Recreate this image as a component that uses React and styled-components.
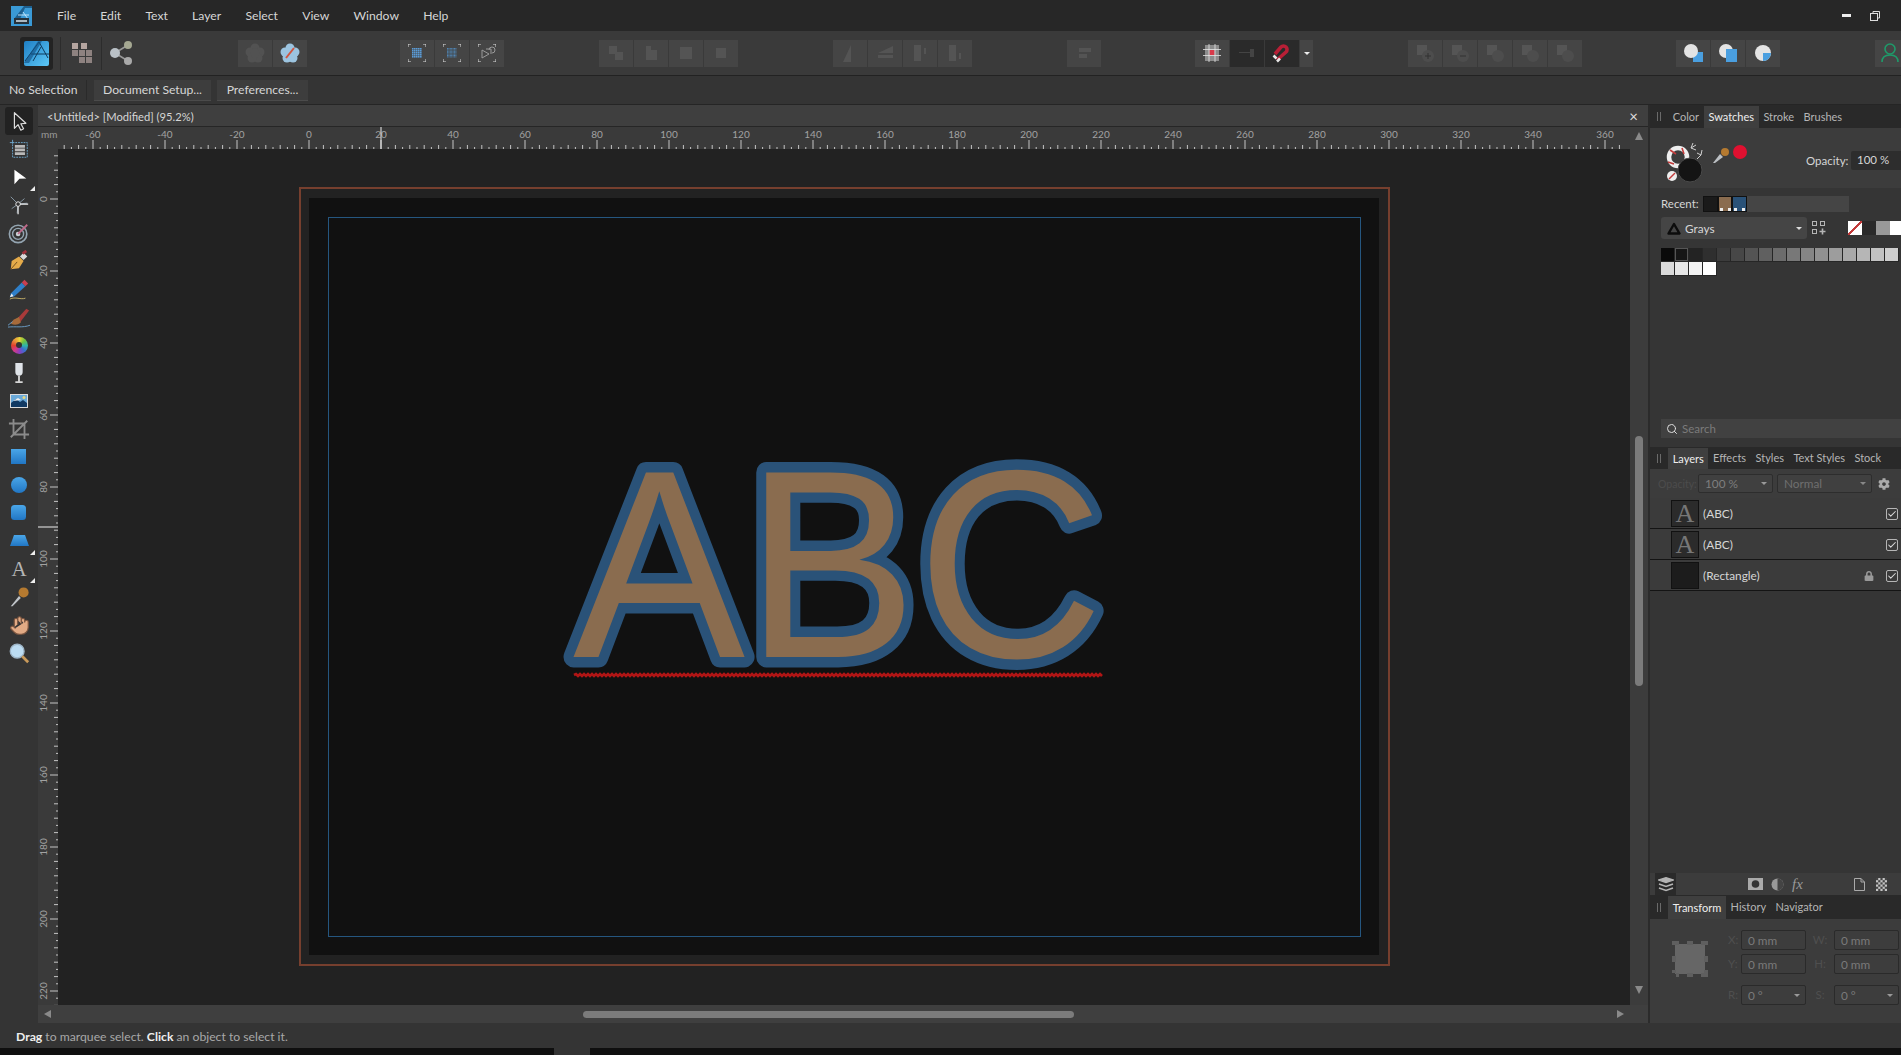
import React from "react";
import styled, { createGlobalStyle } from "styled-components";
import { Search, Hand, Check } from "lucide-react";
import { FaCog, FaLock } from "react-icons/fa";

const GlobalStyle = createGlobalStyle`
  html, body { margin: 0; padding: 0; background: #111; overflow: hidden; }
  * { box-sizing: border-box; }
`;

const UI = `Lato, "Open Sans", "Liberation Sans", sans-serif`;

const Window = styled.div`
  width: 1901px;
  height: 1055px;
  overflow: hidden;
  display: flex;
  flex-direction: column;
  font-family: ${UI};
  font-size: 12.2px;
  color: #d6d6d6;
  background: #111;
`;

/* title bar */
const TitleBar = styled.div`
  height: 31px;
  flex: none;
  display: flex;
  align-items: center;
  padding-left: 11px;
  background: #272727;
`;
const Menu = styled.nav`
  display: flex;
  gap: 24.2px;
  margin-left: 25px;
  font-size: 12.2px;
`;
const WinButtons = styled.div`
  margin-left: auto;
  display: flex;
  align-items: center;
  gap: 19px;
  width: 59px;
`;

/* toolbar */
const Toolbar = styled.div`
  height: 45px;
  flex: none;
  display: flex;
  align-items: center;
  padding-left: 20px;
  background: #3a3a3a;
  border-bottom: 1px solid #222;
  overflow: hidden;
`;
const Persona = styled.div`
  width: 33px;
  height: 33px;
  flex: none;
  background: #232323;
  border-radius: 3px;
  display: flex;
  align-items: center;
  justify-content: center;
`;
const ToolSep = styled.div`
  width: 1px;
  height: 33px;
  flex: none;
  background: #2c2c2c;
  margin-left: ${(p) => p.$left}px;
`;
const PlainIcon = styled.div`
  height: 33px;
  flex: none;
  display: flex;
  align-items: center;
  margin-left: ${(p) => p.$left}px;
`;
const Group = styled.div`
  display: flex;
  flex: none;
  gap: 1px;
  margin-left: ${(p) => p.$left}px;
`;
const ToolBtn = styled.div`
  width: ${(p) => p.$w || 34}px;
  height: 27px;
  flex: none;
  background: ${(p) => (p.$dark ? "#2a2a2a" : "#454545")};
  display: flex;
  align-items: center;
  justify-content: center;
`;

/* context bar */
const ContextBar = styled.div`
  height: 29px;
  flex: none;
  display: flex;
  align-items: center;
  padding-left: 9px;
  background: #343434;
  border-bottom: 1px solid #252525;
`;
const ContextLabel = styled.span`
  width: 78px;
  height: 20px;
  line-height: 20px;
  border-right: 1px solid #2a2a2a;
`;
const ContextButton = styled.div`
  width: ${(p) => p.$w}px;
  height: 21px;
  line-height: 20px;
  margin-left: ${(p) => p.$left}px;
  text-align: center;
  background: #3d3d3d;
  border-bottom: 1px solid #4b4b4b;
`;

/* workspace */
const Workspace = styled.div`
  flex: none;
  height: 918px;
  display: flex;
`;
const ToolColumn = styled.div`
  width: 38px;
  flex: none;
  background: #343434;
  display: flex;
  flex-direction: column;
  align-items: center;
  padding-top: 2px;
`;
const ToolCell = styled.div`
  position: relative;
  width: 28px;
  height: 28px;
  flex: none;
  display: flex;
  align-items: center;
  justify-content: center;
  border-radius: 3px;
  background: ${(p) => (p.$active ? "#222" : "transparent")};
  &::after {
    content: "";
    display: ${(p) => (p.$flyout ? "block" : "none")};
    position: absolute;
    right: -2px;
    bottom: 0;
    border-style: solid;
    border-width: 0 0 5px 5px;
    border-color: transparent transparent #eee transparent;
  }
`;
const ColorWheel = styled.div`
  width: 17px;
  height: 17px;
  border-radius: 50%;
  background: conic-gradient(#e8d33a, #6fc13f, #2fb5a8, #3a6fd0, #8a3fc0, #d03a8a, #e0402f, #e8903a, #e8d33a);
  display: flex;
  align-items: center;
  justify-content: center;
  &::after {
    content: "";
    width: 6px;
    height: 6px;
    border-radius: 50%;
    background: #333;
  }
`;
const Main = styled.div`
  width: 1610px;
  flex: none;
  display: flex;
  flex-direction: column;
`;
const DocTabs = styled.div`
  height: 22px;
  flex: none;
  display: flex;
  align-items: center;
  justify-content: space-between;
  padding: 1px 10px 0 9px;
  background: #3f3f3f;
  border-bottom: 1px solid #262626;
  font-size: 11.2px;
`;
const CloseMark = styled.span`
  font-size: 15px;
  color: #ddd;
  line-height: 1;
`;
const RulerRow = styled.div`
  height: 22px;
  flex: none;
  display: flex;
`;
const RulerH = styled.svg`
  width: 1592px;
  height: 22px;
  flex: none;
  display: block;
  background: #3a3a3a;
`;
const ArrowCell = styled.div`
  width: 18px;
  flex: none;
  background: #3c3c3c;
  display: flex;
  align-items: center;
  justify-content: center;
`;
const Middle = styled.div`
  height: 856px;
  flex: none;
  display: flex;
`;
const RulerV = styled.svg`
  width: 20px;
  height: 856px;
  flex: none;
  display: block;
  background: #3a3a3a;
`;
const Canvas = styled.div`
  width: 1572px;
  flex: none;
  background: #222;
  padding: 38px 0 0 241px;
`;
const Bleed = styled.div`
  width: 1091px;
  height: 779px;
  border: 2px solid #763f2e;
  padding: 9px 9px 9px 8px;
`;
const Page = styled.div`
  width: 100%;
  height: 100%;
  background: #111;
  padding: 19px 18px 18px 19px;
`;
const Margins = styled.div`
  width: 100%;
  height: 100%;
  border: 1px solid #25567f;
`;
const Artwork = styled.svg`
  width: 100%;
  height: 100%;
  display: block;
  overflow: visible;
`;
const VScroll = styled.div`
  width: 18px;
  flex: none;
  background: #3c3c3c;
  display: flex;
  flex-direction: column;
  align-items: center;
  padding-top: 287px;
`;
const VThumb = styled.div`
  width: 8px;
  height: 250px;
  border-radius: 4px;
  background: #7b7b7b;
`;
const ArrowDown = styled.div`
  margin-top: 300px;
  width: 0;
  height: 0;
  border-style: solid;
  border-width: 8px 4.5px 0 4.5px;
  border-color: #8a8a8a transparent transparent transparent;
`;
const ArrowUp = styled.div`
  width: 0;
  height: 0;
  margin-top: -4px;
  border-style: solid;
  border-width: 0 4.5px 8px 4.5px;
  border-color: transparent transparent #8a8a8a transparent;
`;
const HScroll = styled.div`
  height: 18px;
  flex: none;
  background: #3f3f3f;
  display: flex;
  align-items: center;
  padding-left: 6px;
`;
const ArrowLeft = styled.div`
  width: 0;
  height: 0;
  border-style: solid;
  border-width: 4.5px 7px 4.5px 0;
  border-color: transparent #8a8a8a transparent transparent;
`;
const ArrowRight = styled.div`
  width: 0;
  height: 0;
  margin-left: 543px;
  border-style: solid;
  border-width: 4.5px 0 4.5px 7px;
  border-color: transparent transparent transparent #8a8a8a;
`;
const HThumb = styled.div`
  width: 491px;
  height: 7px;
  margin-left: 532px;
  border-radius: 4px;
  background: #7b7b7b;
`;
const Divider = styled.div`
  width: 2px;
  flex: none;
  background: #2b2b2b;
`;

/* right panels */
const Panels = styled.div`
  flex: 1;
  min-width: 0;
  overflow: hidden;
  display: flex;
  flex-direction: column;
  background: #353535;
`;
const TabRow = styled.div`
  height: ${(p) => p.$h}px;
  flex: none;
  display: flex;
  align-items: stretch;
  background: #292929;
`;
const Grip = styled.div`
  width: 18px;
  flex: none;
  display: flex;
  align-items: center;
  justify-content: center;
  gap: 2px;
  &::before, &::after {
    content: "";
    width: 1px;
    height: 9px;
    background: #6a6a6a;
  }
`;
const Tab = styled.div`
  padding: 0 4.7px 1px;
  display: flex;
  align-items: center;
  white-space: nowrap;
  font-size: 11px;
  color: ${(p) => (p.$active ? "#eee" : "#b5b5b5")};
  background: ${(p) => (p.$active ? "#3f3f3f" : "transparent")};
  margin-top: ${(p) => (p.$active ? 1 : 0)}px;
`;
const ColorHead = styled.div`
  height: 60px;
  flex: none;
  background: #3c3c3c;
  display: flex;
  align-items: center;
`;
const ColorWidget = styled.svg`
  width: 156px;
  height: 60px;
  flex: none;
`;
const OpacityLabel = styled.span`
  width: 45px;
  flex: none;
  font-size: 11.5px;
  margin-top: 4px;
`;
const NumberField = styled.div`
  width: 60px;
  height: 19px;
  margin-top: 4px;
  padding-left: 6px;
  line-height: 18px;
  font-size: 11.5px;
  background: #2d2d2d;
  border-radius: 2px;
  flex: none;
`;
const SwatchBody = styled.div`
  height: 231px;
  flex: none;
  padding: 8px 0 0 11px;
  display: flex;
  flex-direction: column;
`;
const RecentRow = styled.div`
  display: flex;
  align-items: center;
  height: 16px;
  font-size: 11.5px;
`;
const RecentLabel = styled.span`
  width: 42px;
  margin-top: -2px;
`;
const RecentWell = styled.div`
  width: 146px;
  height: 16px;
  background: #454545;
  display: flex;
`;
const RecentChip = styled.div`
  position: relative;
  width: 14.5px;
  height: 16px;
  background: ${(p) => p.$c};
  border: 1px solid #111;
  &::after {
    content: "";
    display: ${(p) => (p.$mark ? "block" : "none")};
    position: absolute;
    left: 1px;
    bottom: 0;
    width: 3px;
    height: 3px;
    background: #eee;
    box-shadow: 8px 0 0 #eee;
  }
`;
const PaletteRow = styled.div`
  display: flex;
  align-items: center;
  margin-top: 5px;
  height: 22px;
`;
const PaletteSelect = styled.div`
  width: 146px;
  height: 22px;
  flex: none;
  background: #454545;
  border-radius: 3px;
  display: flex;
  align-items: center;
  padding: 0 5px 0 6px;
  gap: 4px;
  font-size: 11.8px;
`;
const PaletteAdd = styled.svg`
  width: 16px;
  height: 16px;
  flex: none;
  margin: 0 21px 0 4px;
`;
const Caret = styled.span`
  margin-left: ${(p) => (p.$center ? 0 : "auto")};
  width: 0;
  height: 0;
  border-style: solid;
  border-width: 3px 3px 0 3px;
  border-color: ${(p) => p.$c || "#ddd"} transparent transparent transparent;
`;
const QuickChip = styled.div`
  width: 14px;
  height: 14px;
  flex: none;
  background: ${(p) => p.$c};
`;
const NoneChip = styled(QuickChip)`
  background: linear-gradient(to bottom right, #fff 45%, #c23a3a 45%, #c23a3a 55%, #fff 55%);
`;
const SwatchGrid = styled.div`
  display: grid;
  grid-template-columns: repeat(17, 14px);
  grid-auto-rows: 14px;
  margin-top: 9px;
`;
const Swatch = styled.div`
  background: ${(p) => p.$c};
  border: 1px solid #262626;
  border-width: 0 1px 1px 0;
  box-shadow: ${(p) => (p.$on ? "inset 0 0 0 1px #555" : "none")};
`;
const SearchWrap = styled.div`
  height: 28px;
  flex: none;
  padding-left: 11px;
`;
const SearchBox = styled.div`
  height: 19px;
  background: #414141;
  display: flex;
  align-items: center;
  padding-left: 5px;
  gap: 4px;
  color: #7b7b7b;
  font-size: 11.5px;
`;
const LayerControls = styled.div`
  height: 29px;
  flex: none;
  background: #3c3c3c;
  display: flex;
  align-items: center;
  padding-left: 8px;
  font-size: 11.5px;
  color: #555;
`;
const DimLabel = styled.span`
  width: 40px;
  flex: none;
  color: #4c4c4c;
  font-size: 10.5px;
`;
const LayerSelect = styled.div`
  width: ${(p) => p.$w}px;
  height: 19px;
  flex: none;
  margin-right: 4px;
  padding: 0 5px 0 6px;
  display: flex;
  align-items: center;
  background: #404040;
  border: 1px solid #2d2d2d;
  border-radius: 2px;
  color: ${(p) => (p.$dim ? "#6f6f6f" : "#7e7e7e")};
  font-size: 11.8px;
`;
const LayerRow = styled.div`
  height: 31px;
  flex: none;
  display: flex;
  align-items: center;
  padding: 1px 3px 0 21px;
  background: #3b3b3b;
  border-bottom: 1px solid #141414;
  font-size: 11.8px;
`;
const Thumb = styled.div`
  width: 28px;
  height: 27px;
  margin: -1px 4px 0 0;
  flex: none;
  background: ${(p) => (p.$fill ? "#1c1c1c" : "#2b2b2b")};
  border: 1px solid #111;
  font-family: "Liberation Serif", serif;
  font-size: 26px;
  line-height: 26px;
  text-align: center;
  color: #777;
`;
const RowEnd = styled.div`
  margin-left: auto;
  display: flex;
  align-items: center;
  gap: 12px;
  color: #aaa;
`;
const CheckBox = styled.div`
  width: 12px;
  height: 12px;
  border: 1px solid #b5b5b5;
  border-radius: 2px;
  display: flex;
  align-items: center;
  justify-content: center;
  color: #ddd;
`;
const Filler = styled.div`
  flex: 1;
`;
const LayerBar = styled.div`
  height: 22px;
  flex: none;
  background: #3c3c3c;
  display: flex;
  align-items: center;
  padding-left: 5px;
  color: #999;
`;
const LayersBtn = styled.div`
  width: 21px;
  height: 22px;
  background: #2a2a2a;
  display: flex;
  align-items: center;
  justify-content: center;
`;
const BarIcon = styled.div`
  margin-left: ${(p) => p.$left}px;
  display: flex;
  align-items: center;
  font-family: "Liberation Serif", serif;
  font-style: italic;
  font-size: 15px;
`;
const TransformBody = styled.div`
  height: 104px;
  flex: none;
  background: #3c3c3c;
  display: flex;
  padding: 11px 0 0 22px;
  color: #4f4f4f;
  font-size: 11.5px;
`;
const AnchorIcon = styled.svg`
  width: 36px;
  height: 36px;
  margin-top: 11px;
  flex: none;
`;
const FieldGrid = styled.div`
  display: grid;
  margin-left: 20px;
  grid-template-columns: 13px 65px 28px 65px;
  grid-template-rows: 20px 20px 27px;
  row-gap: 4px;
  align-items: end;
`;
const FieldName = styled.span`
  line-height: 20px;
  text-align: ${(p) => (p.$right ? "center" : "left")};
`;
const Field = styled.div`
  height: 20px;
  padding: 0 5px 0 6px;
  display: flex;
  align-items: center;
  background: #3d3d3d;
  border: 1px solid #2a2a2a;
  border-radius: 2px;
  color: #7a7a7a;
  font-size: 11.8px;
`;
const StatusBar = styled.div`
  height: 25px;
  flex: none;
  background: #343434;
  padding: 1px 0 0 16px;
  display: flex;
  align-items: center;
  font-size: 12.2px;
  color: #a8a8a8;
  b { color: #eee; font-weight: 700; }
  span { white-space: pre; }
`;
const BottomStrip = styled.div`
  height: 7px;
  flex: none;
  background: #0f0f0f;
  padding-left: 554px;
`;
const StripNotch = styled.div`
  width: 36px;
  height: 7px;
  background: #343434;
`;

/* drawings */
const Svg = ({ w = 22, h = 22, view = "0 0 24 24", children }) => (
  <svg width={w} height={h} viewBox={view} fill="none">{children}</svg>
);

const BlueFill = ({ id }) => (
  <defs>
    <linearGradient id={id} x1="0" y1="0" x2="0" y2="1">
      <stop offset="0" stopColor="#4aa6e8" />
      <stop offset="1" stopColor="#2176c4" />
    </linearGradient>
  </defs>
);

const AppLogo = () => (
  <svg width="21" height="20" viewBox="0 0 21 20">
    <rect width="21" height="20" fill="#3a9ad6" />
    <path d="M3 13 L13 0 L21 0 L21 2 L14 2 L9 13 Z" fill="#1d5f8e" />
    <path d="M12 6 L17 13 M7 9 L18 9" stroke="#bfe4fa" strokeWidth="1" />
    <rect x="3" y="12" width="15" height="6" fill="#26323b" />
    <rect x="5" y="14" width="11" height="2" fill="#aab7c0" />
  </svg>
);
const PersonaIcon = () => (
  <svg width="25" height="25" viewBox="0 0 25 25">
    <defs>
      <linearGradient id="pers" x1="0" y1="0" x2="1" y2="1">
        <stop offset="0" stopColor="#1f7ec4" />
        <stop offset="1" stopColor="#5cc8f7" />
      </linearGradient>
    </defs>
    <rect width="25" height="25" rx="2" fill="url(#pers)" />
    <path d="M1 20 L15 1 M15 1 L24 17 M9 20 L17 6 M7 13 L25 13" stroke="#0e3a5c" strokeWidth="1" fill="none" />
    <path d="M0 22 L14 0 L18 0 L5 22 Z" fill="#145487" opacity=".65" />
  </svg>
);
const StudioIcon = () => (
  <svg width="22" height="22" viewBox="0 0 22 22">
    <path d="M1 1h6v6H1zM10 1h6v6h-6z" fill="#b5a5a0" />
    <path d="M1 8h6v6H1zM8 8h6v6H8zM15 8h6v6h-6zM8 15h6v6H8zM15 15h6v6h-6z" fill="#8e8280" />
  </svg>
);
const ShareIcon = () => (
  <svg width="24" height="24" viewBox="0 0 24 24">
    <path d="M6 12 L19 4 M6 12 L19 20" stroke="#999" strokeWidth="1.5" />
    <circle cx="6" cy="12" r="5" fill="#b9c0c6" />
    <circle cx="19" cy="4" r="4" fill="#a5a892" />
    <circle cx="19" cy="20" r="4" fill="#a9a9a9" />
  </svg>
);
const Flower = ({ fill, slash }) => (
  <svg width="20" height="20" viewBox="0 0 20 20">
    <g fill={fill}>
      <circle cx="10" cy="5" r="4.5" />
      <circle cx="15" cy="9" r="4.5" />
      <circle cx="13" cy="15" r="4.5" />
      <circle cx="7" cy="15" r="4.5" />
      <circle cx="5" cy="9" r="4.5" />
      <circle cx="10" cy="10" r="5" />
    </g>
    {slash && <path d="M6 15 L14 5" stroke="#d2553f" strokeWidth="2" />}
  </svg>
);
const Corners = ({ children }) => (
  <svg width="18" height="18" viewBox="0 0 18 18">
    <path d="M0 3V0h3M15 0h3v3M18 15v3h-3M3 18H0v-3" stroke="#ddd" strokeWidth="1" fill="none" />
    {children}
  </svg>
);
const Dots = ({ c, x = 4, y = 4, n = 5, s = 2 }) => (
  <g fill={c}>
    {Array.from({ length: n * n }, (_, i) => (
      <rect key={i} x={x + (i % n) * s} y={y + Math.floor(i / n) * s} width={s - 0.4} height={s - 0.4} />
    ))}
  </g>
);
const DimShape = ({ d, c = "#545454" }) => (
  <svg width="20" height="20" viewBox="0 0 20 20">
    <path d={d} fill={c} />
  </svg>
);
const BoolOp = ({ sign }) => (
  <svg width="20" height="20" viewBox="0 0 20 20">
    <rect x="2" y="2" width="10" height="10" fill="#555" />
    <circle cx="13" cy="13" r="6" fill="#4d4d4d" />
    {sign && <path d={sign} stroke="#333" strokeWidth="1" />}
  </svg>
);
const SnapGrid = () => (
  <svg width="18" height="18" viewBox="0 0 18 18">
    <rect x="2" y="1" width="14" height="16" fill="#8c8c8c" />
    <rect x="6.5" y="6" width="5" height="5" fill="#d83a4a" />
    <path d="M0 5.5H18M0 11.5H18M6 0V18M12 0V18" stroke="#e4e4e4" strokeWidth="0.8" />
  </svg>
);
const Magnet = () => (
  <svg width="20" height="20" viewBox="0 0 20 20" fill="none">
    <path d="M5 17 L14 9 A3.5 3.5 0 0 0 9 4 L3 11" stroke="#b81f36" strokeWidth="3.6" />
    <path d="M1.5 12.5 L4.5 15.5 M5 18.5 L8 15.5" stroke="#e8e8e8" strokeWidth="2.6" />
  </svg>
);
const OrderIcon = ({ kind }) => (
  <svg width="21" height="20" viewBox="0 0 21 20">
    {kind === 0 && <><path d="M10 9h10v10H10z" fill="#4a9fe0" /><circle cx="8" cy="8" r="7" fill="#e4e4e4" /></>}
    {kind === 1 && <><circle cx="8" cy="8" r="7" fill="#e4e4e4" /><path d="M8 6h11v13H8z" fill="#4a9fe0" /></>}
    {kind === 2 && <><circle cx="10" cy="10" r="8" fill="#e4e4e4" /><path d="M10 10h8a8 8 0 0 1-8 8z" fill="#4a9fe0" /></>}
  </svg>
);
const AccountIcon = () => (
  <svg width="20" height="22" viewBox="0 0 20 22" fill="none" stroke="#1f9a6a" strokeWidth="1.6">
    <circle cx="10" cy="7" r="5" />
    <path d="M2 20 C2 14 6 13 10 13 C14 13 18 14 18 20" />
  </svg>
);

const tools = [
  { icon: <Svg><path d="M7 3 V20 L11 16 L14 22 L17 20.5 L14 15 L19.5 14.5 Z" stroke="#ddd" strokeWidth="1.3" strokeLinejoin="round" /></Svg>, active: true },
  { icon: <Svg><path d="M5 2v4M2 5h4" stroke="#6ea8cf" /><rect x="5" y="5" width="16" height="16" stroke="#6ea8cf" strokeDasharray="2 1" /><path d="M7.5 7.5h11v3h-11zM7.5 11.5h11v3h-11zM7.5 15.5h11v3h-11z" fill="#b9b9b9" /></Svg> },
  { icon: <Svg w={22} h={22}><path d="M7 4 V20 L12.5 14 L20 13.5 Z" fill="#fff" /></Svg>, flyout: true },
  { icon: <Svg><path d="M3 3 L11 11 L21 10 M11 11 L10 21 M18 5 L11 11 M4 16 L11 11" stroke="#8a9ba8" strokeWidth="1" /><path d="M11 11 H22 M11 11 V22" stroke="#eee" strokeWidth="1.3" /><circle cx="11" cy="11" r="2.5" fill="#333" stroke="#eee" /></Svg> },
  { icon: <Svg><circle cx="11" cy="13" r="9.5" stroke="#93a4b0" strokeWidth="1.8" /><circle cx="11" cy="13" r="6" stroke="#93a4b0" strokeWidth="1.5" /><circle cx="11" cy="13" r="2.5" fill="#c9d0d5" /><path d="M11 13 L21 3" stroke="#c06a8a" strokeWidth="2" /></Svg> },
  { icon: <Svg><path d="M3 21 L4 12 L12 7 L17 12 L12 20 Z" fill="#e5ab4a" /><path d="M3 21 L10 13" stroke="#6b4a1c" /><path d="M13 7 L17 3 L21 7 L17 11 Z" fill="#d9d9d9" /><path d="M16 4 L20 1" stroke="#a0303a" strokeWidth="3" /></Svg> },
  { icon: <Svg><path d="M3 17 L15 5 L19 9 L7 20 L2 21 Z" fill="#2f7fc8" /><path d="M15 5 L18 2 L22 6 L19 9 Z" fill="#c93f4f" /><path d="M2 21 L4 17 L6 20 Z" fill="#eee" /><path d="M2 23 C8 20 14 24 19 22" stroke="#c9b36a" /></Svg> },
  { icon: <Svg><path d="M9 15 L20 3 L23 5 L13 18 Z" fill="#a83a3a" /><path d="M6 15 L12 12 L14 18 C10 21 7 21 3 19 Z" fill="#a66a3a" /><path d="M0 21 L5 17 M0 23 C8 22 16 24 24 21" stroke="#6c9fc8" /></Svg> },
  { wheel: true },
  { icon: <Svg><path d="M8 1h8v10a4 4 0 0 1-8 0z" fill="#dfe3e8" /><path d="M12 15v6M8 22h8" stroke="#d6d6d6" strokeWidth="2" /></Svg> },
  { icon: <svg width="18" height="14" viewBox="0 0 18 14"><rect width="18" height="14" fill="#dcdcdc" /><rect x="1" y="1" width="16" height="12" fill="#6aa9d8" /><path d="M1 9 L6 5 L10 8 L13 6 L17 9 V13 H1 Z" fill="#123a63" /><circle cx="14" cy="3.5" r="1.5" fill="#e8d880" /><path d="M3 7 L8 4 L11 6 Z" fill="#f0f0f0" /></svg> },
  { icon: <Svg><path d="M6 1 V18 H23 M1 6 H18 V23 M3 21 L21 3" stroke="#8b8b8b" strokeWidth="2" /></Svg> },
  { icon: <Svg view="0 0 22 22"><BlueFill id="r1" /><rect x="3" y="3" width="15" height="15" fill="url(#r1)" /></Svg> },
  { icon: <Svg view="0 0 22 22"><BlueFill id="r2" /><circle cx="11" cy="11" r="8" fill="url(#r2)" /></Svg> },
  { icon: <Svg view="0 0 22 22"><BlueFill id="r3" /><rect x="3" y="3" width="15" height="15" rx="3.5" fill="url(#r3)" /></Svg> },
  { icon: <Svg view="0 0 22 22"><BlueFill id="r4" /><path d="M6 5 H17 L21 16 H2 Z" fill="url(#r4)" /></Svg>, flyout: true },
  { text: "A", flyout: true },
  { icon: <Svg><path d="M3 22 L12 11 L14 13 L5 22 Z" fill="#bfc4c8" /><path d="M11 8 L17 14" stroke="#333" strokeWidth="1" /><circle cx="17" cy="7" r="5.5" fill="#b57a30" /></Svg> },
  { hand: true },
  { icon: <Svg><circle cx="10" cy="10" r="7.5" fill="#bcdcf2" stroke="#9fb6c8" strokeWidth="1.5" /><path d="M15.5 15.5 L22 22" stroke="#c99a5a" strokeWidth="3" /></Svg> },
];

const ToolGlyph = styled.span`
  font-family: "Liberation Serif", serif;
  font-size: 21px;
  color: #b5b5b5;
  line-height: 1;
`;

const hTicks = () => {
  const out = [];
  for (let mm = -68; mm <= 364; mm += 2) {
    const x = 309 + mm * 3.6;
    const len = mm % 20 === 0 ? 9 : mm % 4 === 0 ? 4 : 2;
    out.push(<line key={mm} x1={x} x2={x} y1={22 - len} y2={22} stroke="#c4c4c4" strokeWidth="1" />);
    if (mm % 20 === 0)
      out.push(<text key={"l" + mm} x={x} y={11} textAnchor="middle" fontSize="10" fill="#a2a2a2" fontFamily="Lato, sans-serif">{mm}</text>);
  }
  return out;
};

const vTicks = () => {
  const out = [];
  for (let mm = -12; mm <= 224; mm += 2) {
    const y = 50 + mm * 3.6;
    const len = mm % 20 === 0 ? 8 : mm % 4 === 0 ? 4 : 2;
    out.push(<line key={mm} x1={20 - len} x2={20} y1={y} y2={y} stroke="#c4c4c4" strokeWidth="1" />);
    if (mm % 20 === 0)
      out.push(<text key={"l" + mm} transform={`translate(9 ${y}) rotate(-90)`} textAnchor="middle" fontSize="10" fill="#a2a2a2" fontFamily="Lato, sans-serif">{mm}</text>);
  }
  return out;
};

const squiggle = () => {
  let d = "M574 675";
  for (let x = 576, up = true; x <= 1103; x += 2, up = !up) d += ` L${x} ${up ? 674 : 676}`;
  return d;
};

const grays = Array.from({ length: 21 }, (_, i) => {
  const v = Math.round(10 + (i * 245) / 20);
  return `rgb(${v},${v},${v})`;
});

const Tabs = ({ h, items, active }) => (
  <TabRow $h={h}>
    <Grip />
    {items.map((t) => (
      <Tab key={t} $active={t === active}>{t}</Tab>
    ))}
  </TabRow>
);

const layers = [
  { name: "(ABC)", text: true },
  { name: "(ABC)", text: true },
  { name: "(Rectangle)", locked: true },
];

export default function App() {
  return (
    <Window>
      <GlobalStyle />
      <TitleBar>
        <AppLogo />
        <Menu>
          {["File", "Edit", "Text", "Layer", "Select", "View", "Window", "Help"].map((m) => (
            <span key={m}>{m}</span>
          ))}
        </Menu>
        <WinButtons>
          <svg width="9" height="3"><rect width="9" height="3" fill="#eee" /></svg>
          <svg width="10" height="10" viewBox="0 0 10 10" fill="none" stroke="#ddd"><rect x=".5" y="2.5" width="7" height="7" /><path d="M3 2V.5h6.5V7H8" /></svg>
        </WinButtons>
      </TitleBar>

      <Toolbar>
        <Persona><PersonaIcon /></Persona>
        <ToolSep $left={7} />
        <PlainIcon $left={10}><StudioIcon /></PlainIcon>
        <ToolSep $left={8} />
        <PlainIcon $left={7}><ShareIcon /></PlainIcon>

        <Group $left={104.5}>
          <ToolBtn><Flower fill="#525252" /></ToolBtn>
          <ToolBtn><Flower fill="#9cc4e0" slash /></ToolBtn>
        </Group>
        <Group $left={93.5}>
          <ToolBtn><Corners><Dots c="#5a9bd6" /></Corners></ToolBtn>
          <ToolBtn><Corners><Dots c="#5085b5" n={7} s={1.4} /></Corners></ToolBtn>
          <ToolBtn><Corners><path d="M4 6 L4 14 L11 10 Z M8 5 h5 v5 M11 6 a3 3 0 1 1 3 3" stroke="#9a9a9a" fill="none" /></Corners></ToolBtn>
        </Group>
        <Group $left={95}>
          <ToolBtn><DimShape d="M3 3h8v8H3zM9 9h8v8H9z" /></ToolBtn>
          <ToolBtn><DimShape d="M5 3h5v4h6v10H5z" /></ToolBtn>
          <ToolBtn><DimShape d="M4 4h12v12H4z" /></ToolBtn>
          <ToolBtn><DimShape d="M5 5h10v10H5z" /></ToolBtn>
        </Group>
        <Group $left={95}>
          <ToolBtn><DimShape d="M11 2 V19 H3 Z" /></ToolBtn>
          <ToolBtn><DimShape d="M3 10 L18 3 V10 Z M3 12 H18 V15 H3 Z" /></ToolBtn>
          <ToolBtn><DimShape d="M4 2h7v16H4zM14 5h2v6h-2z" /></ToolBtn>
          <ToolBtn><DimShape d="M4 2h7v16H4zM14 10h2v6h-2z" /></ToolBtn>
        </Group>
        <Group $left={94.5}>
          <ToolBtn><DimShape d="M5 5h12v4H5zM5 11h8v4H5z" /></ToolBtn>
        </Group>
        <Group $left={94.5}>
          <ToolBtn><SnapGrid /></ToolBtn>
          <ToolBtn $dark><DimShape c="#444" d="M2 9h11v1H2zM13 6h4v8h-4z" /></ToolBtn>
          <ToolBtn $dark><Magnet /></ToolBtn>
          <ToolBtn $w={13}><Caret $c="#eee" $center /></ToolBtn>
        </Group>
        <Group $left={95}>
          <ToolBtn><BoolOp sign="M13 10v6M10 13h6" /></ToolBtn>
          <ToolBtn><BoolOp sign="M10 13h6" /></ToolBtn>
          <ToolBtn><BoolOp /></ToolBtn>
          <ToolBtn><BoolOp /></ToolBtn>
          <ToolBtn><BoolOp /></ToolBtn>
        </Group>
        <Group $left={94}>
          <ToolBtn><OrderIcon kind={0} /></ToolBtn>
          <ToolBtn><OrderIcon kind={1} /></ToolBtn>
          <ToolBtn><OrderIcon kind={2} /></ToolBtn>
        </Group>
        <Group $left={95}>
          <ToolBtn $w={30}><AccountIcon /></ToolBtn>
        </Group>
      </Toolbar>

      <ContextBar>
        <ContextLabel>No Selection</ContextLabel>
        <ContextButton $w={117} $left={7}>Document Setup...</ContextButton>
        <ContextButton $w={91} $left={6}>Preferences...</ContextButton>
      </ContextBar>

      <Workspace>
        <ToolColumn>
          {tools.map((t, i) => (
            <ToolCell key={i} $active={t.active} $flyout={t.flyout}>
              {t.icon}
              {t.wheel && <ColorWheel />}
              {t.hand && <Hand size={21} fill="#e2aa84" color="#7a5540" strokeWidth={1.4} />}
              {t.text && <ToolGlyph>{t.text}</ToolGlyph>}
            </ToolCell>
          ))}
        </ToolColumn>

        <Main>
          <DocTabs>
            <span>{"<Untitled> [Modified] (95.2%)"}</span>
            <CloseMark>×</CloseMark>
          </DocTabs>
          <RulerRow>
            <RulerH viewBox="38 0 1592 22">
              <text x="41" y="11" fontSize="10" fill="#9a9a9a" fontFamily="Lato, sans-serif">mm</text>
              {hTicks()}
              <line x1="381" x2="381" y1="0" y2="22" stroke="#eee" />
            </RulerH>
            <ArrowCell><ArrowUp /></ArrowCell>
          </RulerRow>
          <Middle>
            <RulerV viewBox="0 0 20 856">
              {vTicks()}
              <line x1="0" x2="20" y1="378" y2="378" stroke="#eee" />
            </RulerV>
            <Canvas>
              <Bleed>
                <Page>
                  <Margins>
                    <Artwork viewBox="329 218 1031 718">
                      <text
                        transform="translate(573 657) scale(1 1.04)"
                        fontFamily="'Liberation Sans', Arial, sans-serif"
                        fontSize="258"
                        fill="#8a6c4f"
                        stroke="#2a5278"
                        strokeWidth="20"
                        strokeLinejoin="round"
                        paintOrder="stroke"
                      >
                        ABC
                      </text>
                      <path d={squiggle()} stroke="#b01515" strokeWidth="2.6" fill="none" />
                    </Artwork>
                  </Margins>
                </Page>
              </Bleed>
            </Canvas>
            <VScroll>
              <VThumb />
              <ArrowDown />
            </VScroll>
          </Middle>
          <HScroll>
            <ArrowLeft />
            <HThumb />
            <ArrowRight />
          </HScroll>
        </Main>

        <Divider />

        <Panels>
          <Tabs h={23} items={["Color", "Swatches", "Stroke", "Brushes"]} active="Swatches" />
          <ColorHead>
            <ColorWidget viewBox="0 0 156 60" fill="none">
              <circle cx="28" cy="29" r="9" stroke="#eee" strokeWidth="4.5" />
              <path d="M20 22 L26 26 M32 20 L34 26 M18 34 L24 36" stroke="#c23a3a" strokeWidth="1.6" />
              <circle cx="40" cy="42" r="12" fill="#141414" stroke="#4a4a4a" strokeWidth="1" />
              <circle cx="22" cy="48" r="5" fill="#eee" />
              <path d="M19 51 L25 45" stroke="#c23a3a" strokeWidth="1.5" />
              <path d="M41 20 L46 17 M43 15 L41 20 L46 22 M51 27 L47 31 M52 22 L51 27 L47 25" stroke="#cfcfcf" strokeWidth="1" />
              <path d="M63 35 L70 26 L73 29 L65 35 Z" fill="#bcc0c4" />
              <circle cx="75" cy="24" r="4" fill="#b57a30" />
              <circle cx="90" cy="24" r="7" fill="#e01030" />
            </ColorWidget>
            <OpacityLabel>Opacity:</OpacityLabel>
            <NumberField>100 %</NumberField>
          </ColorHead>
          <SwatchBody>
            <RecentRow>
              <RecentLabel>Recent:</RecentLabel>
              <RecentWell>
                <RecentChip $c="#1a1a1a" />
                <RecentChip $c="#8a6c4f" $mark />
                <RecentChip $c="#2a5278" $mark />
              </RecentWell>
            </RecentRow>
            <PaletteRow>
              <PaletteSelect>
                <svg width="14" height="13" viewBox="0 0 14 13" fill="none"><path d="M7 2 L12.5 11.5 H1.5 Z" stroke="#0c0c0c" strokeWidth="2.4" strokeLinejoin="round" /></svg>
                Grays
                <Caret />
              </PaletteSelect>
              <PaletteAdd viewBox="0 0 16 16" fill="none" stroke="#b5b5b5">
                <rect x="1.5" y="1.5" width="4" height="4" /><rect x="9.5" y="1.5" width="4" height="4" /><rect x="1.5" y="9.5" width="4" height="4" />
                <path d="M11.5 8.5v6M8.5 11.5h6" strokeWidth="1.6" />
              </PaletteAdd>
              <NoneChip />
              <QuickChip $c="#2a2a2a" />
              <QuickChip $c="#999" />
              <QuickChip $c="#fff" />
            </PaletteRow>
            <SwatchGrid>
              {grays.map((c, i) => (
                <Swatch key={c} $c={c} $on={i === 1} />
              ))}
            </SwatchGrid>
          </SwatchBody>
          <SearchWrap>
            <SearchBox>
              <Search size={12} color="#ddd" />
              Search
            </SearchBox>
          </SearchWrap>

          <Tabs h={22} items={["Layers", "Effects", "Styles", "Text Styles", "Stock"]} active="Layers" />
          <LayerControls>
            <DimLabel>Opacity:</DimLabel>
            <LayerSelect $w={75}>100 %<Caret $c="#999" /></LayerSelect>
            <LayerSelect $w={95} $dim>Normal<Caret $c="#888" /></LayerSelect>
            <FaCog size={12} color="#aaa" style={{ marginLeft: 2 }} />
          </LayerControls>
          {layers.map((l, i) => (
            <LayerRow key={i}>
              <Thumb $fill={!l.text}>{l.text ? "A" : ""}</Thumb>
              {l.name}
              <RowEnd>
                {l.locked && <FaLock size={10} color="#999" />}
                <CheckBox><Check size={10} strokeWidth={2.5} /></CheckBox>
              </RowEnd>
            </LayerRow>
          ))}
          <Filler />
          <LayerBar>
            <LayersBtn>
              <svg width="16" height="15" viewBox="0 0 16 15" fill="none" stroke="#b5b5b5" strokeWidth="1.6">
                <path d="M1 3 L8 0.8 L15 3 L8 5.5 Z" fill="#b5b5b5" />
                <path d="M1 7 L8 9.5 L15 7 M1 11 L8 13.5 L15 11" />
              </svg>
            </LayersBtn>
            <BarIcon $left={72}>
              <svg width="15" height="12" viewBox="0 0 15 12"><rect width="15" height="12" fill="#aaa" /><circle cx="7.5" cy="6" r="3.8" fill="#333" /></svg>
            </BarIcon>
            <BarIcon $left={8}>
              <svg width="13" height="13" viewBox="0 0 13 13"><circle cx="6.5" cy="6.5" r="6" fill="#999" /><path d="M6.5 .5 A6 6 0 0 1 6.5 12.5 Z" fill="#444" /></svg>
            </BarIcon>
            <BarIcon $left={8}>fx</BarIcon>
            <BarIcon $left={51}>
              <svg width="11" height="13" viewBox="0 0 11 13" fill="none" stroke="#aaa"><path d="M1 .5H7L10.5 4V12.5H.5V.5ZM7 .5V4H10.5" /></svg>
            </BarIcon>
            <BarIcon $left={11}>
              <svg width="11" height="13" viewBox="0 0 11 13">
                <rect width="11" height="13" fill="#c4c4c4" />
                {Array.from({ length: 30 }, (_, i) => {
                  const col = i % 5;
                  const row = Math.floor(i / 5);
                  return (col + row) % 2 ? null : (
                    <rect key={i} x={col * 2.2} y={row * 2.17} width="2.2" height="2.17" fill="#444" />
                  );
                })}
              </svg>
            </BarIcon>
          </LayerBar>

          <Tabs h={24} items={["Transform", "History", "Navigator"]} active="Transform" />
          <TransformBody>
            <AnchorIcon viewBox="0 0 36 36">
              <rect x="3" y="3" width="30" height="30" fill="#666" />
              <path d="M0 0h7v4H0zM15 0h6v4h-6zM29 0h7v4h-7zM0 15h4v6H0zM32 15h4v6h-4zM0 29h4v7H0zM7 32H0v4h7zM15 32h6v4h-6zM29 32h7v4h-7zM32 29h4v7h-4z" fill="#5f5f5f" />
            </AnchorIcon>
            <FieldGrid>
              <FieldName>X:</FieldName><Field>0 mm</Field>
              <FieldName $right>W:</FieldName><Field>0 mm</Field>
              <FieldName>Y:</FieldName><Field>0 mm</Field>
              <FieldName $right>H:</FieldName><Field>0 mm</Field>
              <FieldName>R:</FieldName><Field>0 °<Caret $c="#999" /></Field>
              <FieldName $right>S:</FieldName><Field>0 °<Caret $c="#999" /></Field>
            </FieldGrid>
          </TransformBody>
        </Panels>
      </Workspace>

      <StatusBar>
        <b>Drag</b><span> to marquee select. </span><b>Click</b><span> an object to select it.</span>
      </StatusBar>
      <BottomStrip><StripNotch /></BottomStrip>
    </Window>
  );
}
